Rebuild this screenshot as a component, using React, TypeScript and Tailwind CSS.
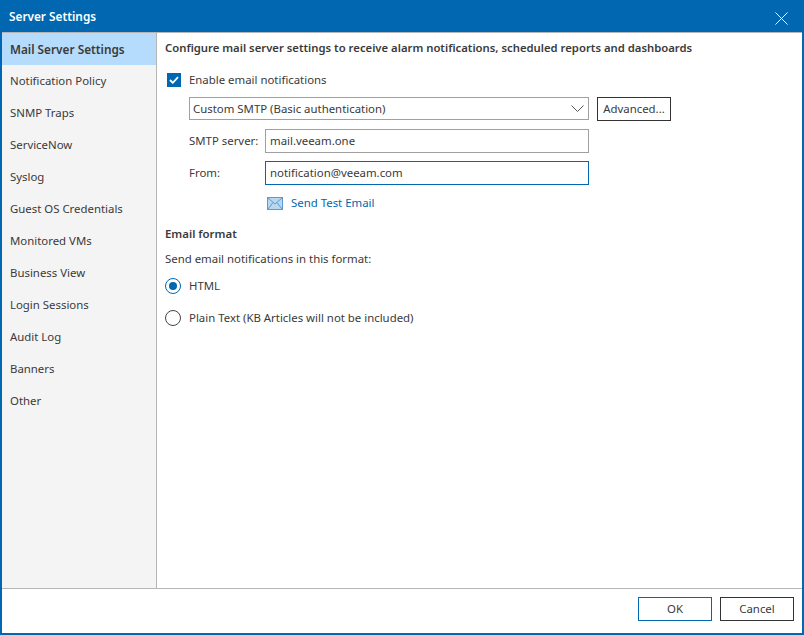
const navItems = [
  "Mail Server Settings",
  "Notification Policy",
  "SNMP Traps",
  "ServiceNow",
  "Syslog",
  "Guest OS Credentials",
  "Monitored VMs",
  "Business View",
  "Login Sessions",
  "Audit Log",
  "Banners",
  "Other",
]

function Radio({ checked, label }: { checked?: boolean; label: string }) {
  return (
    <div className="flex items-center h-4 gap-[8px]">
      <span className={`w-4 h-4 rounded-full border-[1.5px] bg-white flex items-center justify-center ${checked ? "border-[#0067b0]" : "border-[#444]"}`}>
        {checked && <span className="w-2 h-2 rounded-full bg-[#0067b0]" />}
      </span>
      <span>{label}</span>
    </div>
  )
}

export default function App() {
  return (
    <div className="w-[804px] h-[635px] flex flex-col bg-[#0067b0] text-[11.4px] leading-4 text-[#3a3a3a] font-['Noto_Sans','Open_Sans',sans-serif] overflow-hidden">
      {/* Title bar */}
      <header className="h-[32px] shrink-0 flex items-center justify-between pl-[9px] pr-[16px] text-white text-[11.8px] font-semibold">
        <span>Server Settings</span>
        <svg width="13" height="13" viewBox="0 0 13 13" className="mt-[4px]">
          <path d="M0.500 0.500l12 12M12.500 0.500l-12 12" fill="none" stroke="#fff" strokeWidth="1" />
        </svg>
      </header>

      <div className="flex-1 mx-[2px] mb-[2px] flex flex-col bg-white border-t border-[#b5b5b5]">
        <div className="flex-1 flex min-h-0">
          {/* Left nav */}
          <aside className="w-[155px] shrink-0 bg-[#f4f4f4] border-r border-[#b5b5b5]">
            {navItems.map((item, i) => (
              <div
                key={item}
                className={`h-[32px] flex items-center pl-[8px] ${i === 0 ? "bg-[#b5dcfc] font-semibold text-[11.8px]" : ""}`}
              >
                {item}
              </div>
            ))}
          </aside>

          {/* Mail settings */}
          <main className="flex-1 pl-[8px] pt-[7px]">
            <h1 className="font-semibold h-4 text-[11.3px]">Configure mail server settings to receive alarm notifications, scheduled reports and dashboards</h1>

            <div className="mt-[16px] ml-[2px] flex items-center gap-[8px] h-4">
              <span className="w-[14px] h-[14px] bg-[#0067b0] flex items-center justify-center">
                <svg width="10" height="8" viewBox="0 0 10 8">
                  <path d="M1 4l2.800 2.800L9 1.200" fill="none" stroke="#fff" strokeWidth="1.800" />
                </svg>
              </span>
              <span>Enable email notifications</span>
            </div>

            <div className="mt-[9px] ml-[24px] flex gap-[8px]">
              <div className="w-[400px] h-[23px] border border-[#a0a0a0] flex items-center justify-between pl-[3px] pr-[4px]">
                <span>Custom SMTP (Basic authentication)</span>
                <svg width="13" height="7" viewBox="0 0 13 7">
                  <path d="M0.500 0.500l6 6 6-6" fill="none" stroke="#555" strokeWidth="1" />
                </svg>
              </div>
              <button className="w-[74px] h-[24px] border border-[#333] flex items-center justify-center">Advanced...</button>
            </div>

            <div className="mt-[8px] ml-[24px] flex items-center">
              <label className="w-[76px]">SMTP server:</label>
              <div className="w-[324px] h-[24px] border border-[#a0a0a0] flex items-center pl-[4px]">mail.veeam.one</div>
            </div>

            <div className="mt-[8px] ml-[24px] flex items-center">
              <label className="w-[76px]">From:</label>
              <div className="w-[324px] h-[24px] border border-[#0067b0] flex items-center pl-[4px]">notification@veeam.com</div>
            </div>

            <div className="mt-[10px] ml-[102px] flex items-center gap-[8px] h-4">
              <svg width="16" height="13" viewBox="0 0 16 13">
                <rect x="0.500" y="0.500" width="15" height="12" fill="#b9d7ee" stroke="#5b9bd0" />
                <path d="M1 1l7 6 7-6M1 12l5-6.500M15 12l-5-6.500" fill="none" stroke="#5b9bd0" />
              </svg>
              <span className="text-[#0067b0]">Send Test Email</span>
            </div>

            <h2 className="mt-[15px] font-semibold h-4">Email format</h2>
            <p className="mt-[9px] h-4">Send email notifications in this format:</p>

            <div className="mt-[11px] flex flex-col gap-[16px]">
              <Radio checked label="HTML" />
              <Radio label="Plain Text (KB Articles will not be included)" />
            </div>
          </main>
        </div>

        {/* Footer buttons */}
        <footer className="h-[45px] shrink-0 border-t border-[#b5b5b5] flex items-start justify-end gap-[8px] pt-[8px] pr-[8px]">
          <button className="w-[74px] h-[24px] border border-[#0067b0] flex items-center justify-center">OK</button>
          <button className="w-[74px] h-[24px] border border-[#333] flex items-center justify-center">Cancel</button>
        </footer>
      </div>
    </div>
  )
}
